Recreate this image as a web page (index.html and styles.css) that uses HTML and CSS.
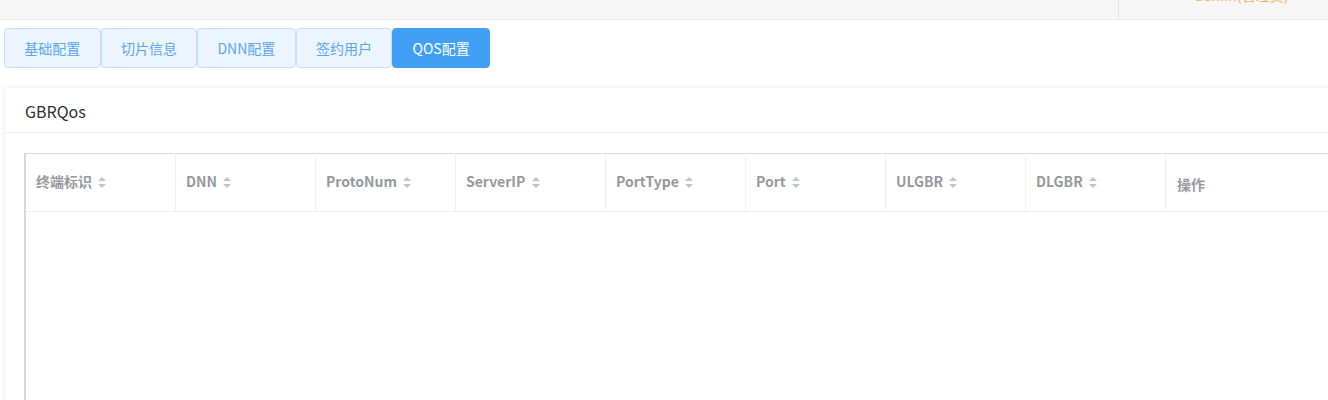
FILE: index.html
```html
<!DOCTYPE html>
<html lang="zh-CN">

<head>
  <meta charset="UTF-8">
  <meta name="viewport" content="width=device-width, initial-scale=1.0">
  <title>QOS配置</title>
  <link rel="stylesheet" href="styles.css">
</head>

<body>
  <div class="topbar">
    <div class="topbar-left"></div>
    <div class="topbar-user"><span class="user-name">admin(管理员)</span></div>
  </div>

  <div class="tabs">
    <button class="tab">基础配置</button>
    <button class="tab">切片信息</button>
    <button class="tab">DNN配置</button>
    <button class="tab">签约用户</button>
    <button class="tab active">QOS配置</button>
  </div>

  <div class="card">
    <div class="card-header">GBRQos</div>
    <div class="card-body">
      <table class="grid">
        <thead>
          <tr>
            <th class="w151">终端标识 <span class="sort"></span></th>
            <th class="w140">DNN <span class="sort"></span></th>
            <th class="w140">ProtoNum <span class="sort"></span></th>
            <th class="w150">ServerIP <span class="sort"></span></th>
            <th class="w140">PortType <span class="sort"></span></th>
            <th class="w140">Port <span class="sort"></span></th>
            <th class="w140">ULGBR <span class="sort"></span></th>
            <th class="w140">DLGBR <span class="sort"></span></th>
            <th class="op">操作</th>
          </tr>
        </thead>
        <tbody>
          <tr class="empty">
            <td colspan="9"></td>
          </tr>
        </tbody>
      </table>
    </div>
  </div>
</body>

</html>
```

FILE: styles.css
```css
html,
body {
  margin: 0;
  overflow: hidden;
  background-color: #fff;
  font-family: "Noto Sans CJK SC", "Noto Sans", sans-serif;
}

.topbar {
  height: 19px;
  background-color: #f6f6f6;
  border-bottom: 1px solid #efefef;
  display: flex;
  overflow: hidden;
}

.topbar-left {
  width: 1118px;
  border-right: 1px solid #e4e4e4;
}

.topbar-user {
  flex: 1;
  padding-left: 76px;
}

.user-name {
  display: block;
  margin-top: -14px;
  font-size: 14px;
  line-height: 18px;
  color: #f0b45a;
}

.tabs {
  display: flex;
  margin: 8px 0 0 4px;
}

.tab {
  height: 40px;
  padding: 0 19.3px;
  font-family: inherit;
  font-size: 14px;
  color: #5aa6f2;
  background-color: #ecf5ff;
  border: 1px solid #c6e0fb;
  border-radius: 4px;
}

.tab.active {
  color: #fff;
  background-color: #419ff5;
  border-color: #419ff5;
}

.card {
  width: 1360px;
  margin: 20px 0 0 5px;
  border-radius: 4px;
  box-shadow: 0 0 6px rgba(0, 0, 0, 0.09);
  background-color: #fff;
}

.card-header {
  height: 44px;
  line-height: 46px;
  padding-left: 20px;
  font-size: 16px;
  color: #303133;
  border-bottom: 1px solid #eef0f4;
}

.card-body {
  padding: 20px 0 0 19px;
}

.grid {
  border-collapse: collapse;
  table-layout: fixed;
  width: 1340px;
  border-top: 1px solid #d6d8dc;
  border-left: 2px solid #d6d8dc;
}

.grid th {
  height: 54px;
  padding: 0 10px 3px;
  text-align: left;
  font-size: 14px;
  font-weight: bold;
  color: #97999e;
  border-right: 1px solid #eef0f4;
  border-bottom: 1px solid #eef0f4;
  white-space: nowrap;
}

.grid th.op {
  padding: 3px 11px 0;
  border-right: none;
}

.w151 {
  width: 129px;
}

.w140 {
  width: 119px;
}

.w150 {
  width: 129px;
}

.sort {
  display: inline-block;
  vertical-align: middle;
  margin-left: 3px;
  width: 0;
  height: 11px;
  border-left: 4px solid transparent;
  border-right: 4px solid transparent;
  position: relative;
  top: -1px;
}

.sort::before,
.sort::after {
  content: "";
  position: absolute;
  left: -4px;
  border-left: 4px solid transparent;
  border-right: 4px solid transparent;
}

.sort::before {
  top: 0;
  border-bottom: 4px solid #c0c4cc;
}

.sort::after {
  bottom: 0;
  border-top: 4px solid #c0c4cc;
}

.empty td {
  height: 200px;
}
```
